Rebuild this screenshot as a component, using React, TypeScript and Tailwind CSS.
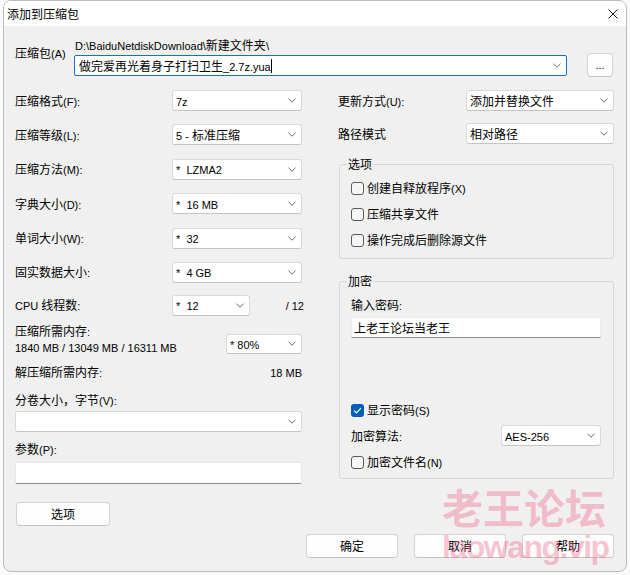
import React from 'react';

// CJK runs stay in Noto Sans CJK 12px, Latin runs use a narrower face so widths match Segoe UI
const CJK = /([\u2E80-\u9FFF\u3000-\u303F\uFF00-\uFFEF]+)/;
const IS_CJK = /^[\u2E80-\u9FFF\u3000-\u303F\uFF00-\uFFEF]+$/;

function T({ s }: { s: string }) {
  return (
    <>
      {s.split(CJK).map((part, i) =>
        part === '' ? null : IS_CJK.test(part) ? (
          <span key={i}>{part}</span>
        ) : (
          <span key={i} className="font-['Liberation_Sans',sans-serif] text-[11px] leading-[11px]">
            {part}
          </span>
        )
      )}
    </>
  );
}

function Chevron() {
  return (
    <svg width="8" height="5" viewBox="0 0 8 5" className="shrink-0">
      <path d="M0.5 0.8 L4 4.2 L7.5 0.8" stroke="#6b6b6b" strokeWidth="1" fill="none" />
    </svg>
  );
}

function Select({ value, className = '' }: { value: string; className?: string }) {
  return (
    <div
      className={`flex items-center justify-between bg-white border border-[#d9d9d9] border-b-[#c4c4c4] rounded-[3px] pl-[3px] pr-[5px] whitespace-pre ${className}`}
    >
      <span>
        <T s={value} />
      </span>
      <Chevron />
    </div>
  );
}

function Checkbox({ label, checked = false }: { label: string; checked?: boolean }) {
  return (
    <div className="flex items-center gap-[3px] h-[16px]">
      {checked ? (
        <div className="w-[13px] h-[13px] rounded-[3px] bg-[#005fb8] flex items-center justify-center">
          <svg width="9" height="7" viewBox="0 0 9 7">
            <path d="M1 3.6 L3.4 5.8 L8 1.2" stroke="white" strokeWidth="1.2" fill="none" />
          </svg>
        </div>
      ) : (
        <div className="w-[13px] h-[13px] rounded-[3px] border border-[#5c5c5c] bg-[#f6f6f6]" />
      )}
      <span>
        <T s={label} />
      </span>
    </div>
  );
}

function Button({ label, className = '' }: { label: string; className?: string }) {
  return (
    <div
      className={`flex items-center justify-center h-[24px] bg-[#fdfdfd] border border-[#d3d3d3] border-b-[#c2c2c2] rounded-[4px] ${className}`}
    >
      <T s={label} />
    </div>
  );
}

function Row({ label, value }: { label: string; value: string }) {
  return (
    <div className="flex items-center justify-between h-[21px]">
      <span>
        <T s={label} />
      </span>
      <Select value={value} className="w-[130px] h-[21px]" />
    </div>
  );
}

export default function App() {
  return (
    <div className="relative w-[630px] h-[575px] bg-[#fafafa] overflow-hidden text-[12px] leading-[16px] text-black font-['Noto_Sans_CJK_SC',sans-serif]">
      <div className="ml-[3px] w-[624px] h-[572px] border border-[#bcbcbc] rounded-[8px] overflow-hidden bg-[#f0f0f0] flex flex-col">
        {/* Title bar */}
        <div className="h-[25px] bg-white flex items-center justify-between pl-[3px] pr-[8px]">
          <span>添加到压缩包</span>
          <svg width="10" height="10" viewBox="0 0 10 10">
            <path d="M0.5 0.5 L9.5 9.5 M9.5 0.5 L0.5 9.5" stroke="#111" strokeWidth="1" />
          </svg>
        </div>

        <div className="flex flex-col px-[11px] pt-[11px]">
          {/* Archive path */}
          <div className="flex items-start">
            <span className="w-[59px] mt-[8px] h-[16px]">
              <T s="压缩包(A)" />
            </span>
            <div className="w-[493px] flex flex-col">
              <span className="pl-[1px] h-[16px]">
                <T s="D:\BaiduNetdiskDownload\新建文件夹\" />
              </span>
              <div className="mt-[2px] h-[21px] bg-white border border-[#1a6fc0] rounded-[2px] flex items-center justify-between pl-[4px] pr-[5px]">
                <div className="flex items-center">
                  <span>
                    <T s="做完爱再光着身子打扫卫生_2.7z.yua" />
                  </span>
                  <span className="w-[1px] h-[14px] bg-black" />
                </div>
                <Chevron />
              </div>
            </div>
            <Button label="..." className="ml-[20px] mt-[16px] w-[26px] h-[23px]" />
          </div>

          {/* Columns */}
          <div className="flex mt-[13px] gap-[36px]">
            {/* Left */}
            <div className="w-[287px] flex flex-col">
              <div className="flex flex-col gap-[13.4px]">
                <Row label="压缩格式(F):" value="7z" />
                <Row label="压缩等级(L):" value="5 - 标准压缩" />
                <Row label="压缩方法(M):" value="*  LZMA2" />
                <Row label="字典大小(D):" value="*  16 MB" />
                <Row label="单词大小(W):" value="*  32" />
                <Row label="固实数据大小:" value="*  4 GB" />
              </div>

              <div className="mt-[12px] flex items-center h-[21px]">
                <span className="w-[157px]">
                  <T s="CPU 线程数:" />
                </span>
                <Select value="*  12" className="w-[78px] h-[21px]" />
                <span className="flex-1 text-right -mr-[2px]">
                  <T s="/ 12" />
                </span>
              </div>

              <div className="mt-[7px] flex items-start justify-between">
                <div className="flex flex-col">
                  <span className="h-[16px]">
                    <T s="压缩所需内存:" />
                  </span>
                  <span className="h-[16px]">
                    <T s="1840 MB / 13049 MB / 16311 MB" />
                  </span>
                </div>
                <Select value="* 80%" className="w-[76px] h-[20px] mt-[11px]" />
              </div>

              <div className="mt-[9px] flex justify-between h-[16px]">
                <span>
                  <T s="解压缩所需内存:" />
                </span>
                <span>
                  <T s="18 MB" />
                </span>
              </div>

              <span className="mt-[12px] h-[16px]">
                <T s="分卷大小，字节(V):" />
              </span>
              <Select value="" className="mt-[3px] h-[21px] w-full" />

              <span className="mt-[9px] h-[16px]">
                <T s="参数(P):" />
              </span>
              <div className="mt-[5px] h-[22px] bg-white border border-[#e6e6e6] border-b-[#8a8a8a] rounded-[2px]" />

              <Button label="选项" className="mt-[18px] ml-[1px] w-[94px]" />
            </div>

            {/* Right */}
            <div className="w-[276px] flex flex-col">
              <div className="flex items-center justify-between h-[21px]">
                <span>
                  <T s="更新方式(U):" />
                </span>
                <Select value="添加并替换文件" className="w-[148px] h-[21px]" />
              </div>
              <div className="mt-[12px] flex items-center justify-between h-[21px]">
                <span>路径模式</span>
                <Select value="相对路径" className="w-[148px] h-[21px]" />
              </div>

              <fieldset className="mt-[12px] ml-[1px] border border-[#d8d8d8] rounded-[3px]">
                <legend className="ml-[7px] px-[1px]">选项</legend>
                <div className="flex flex-col gap-[10px] pl-[11px] pt-[8px] pb-[10px]">
                  <Checkbox label="创建自释放程序(X)" />
                  <Checkbox label="压缩共享文件" />
                  <Checkbox label="操作完成后删除源文件" />
                </div>
              </fieldset>

              <fieldset className="mt-[14px] ml-[1px] border border-[#d8d8d8] rounded-[3px]">
                <legend className="ml-[7px] px-[1px]">加密</legend>
                <div className="flex flex-col pl-[11px] pr-[12px] pt-[8px] pb-[8px]">
                  <span className="h-[16px]">
                    <T s="输入密码:" />
                  </span>
                  <div className="mt-[4px] h-[21px] bg-white border border-[#ececec] border-b-[#8a8a8a] flex items-center pl-[2px]">
                    上老王论坛当老王
                  </div>
                  <div className="mt-[64px]">
                    <Checkbox label="显示密码(S)" checked />
                  </div>
                  <div className="mt-[7px] flex items-center justify-between h-[21px]">
                    <span>
                      <T s="加密算法:" />
                    </span>
                    <Select value="AES-256" className="w-[100px] h-[21px]" />
                  </div>
                  <div className="mt-[8px]">
                    <Checkbox label="加密文件名(N)" />
                  </div>
                </div>
              </fieldset>
            </div>
          </div>

          {/* Bottom buttons */}
          <div className="mt-[8px] flex justify-end gap-[16px] pr-[1px]">
            <Button label="确定" className="w-[92px] border-[#1a6fc0] border-b-[#1a6fc0]" />
            <Button label="取消" className="w-[92px]" />
            <Button label="帮助" className="w-[92px]" />
          </div>
        </div>
      </div>

      {/* Watermark */}
      <div className="absolute left-[442px] top-[484px] flex flex-col items-start pointer-events-none text-[rgba(240,90,130,0.35)] font-bold">
        <span className="text-[41px] leading-[44px]">老王论坛</span>
        <span className="text-[32px] leading-[38px] font-['Liberation_Sans',sans-serif] tracking-[-1.5px]">laowang.vip</span>
      </div>
    </div>
  );
}
